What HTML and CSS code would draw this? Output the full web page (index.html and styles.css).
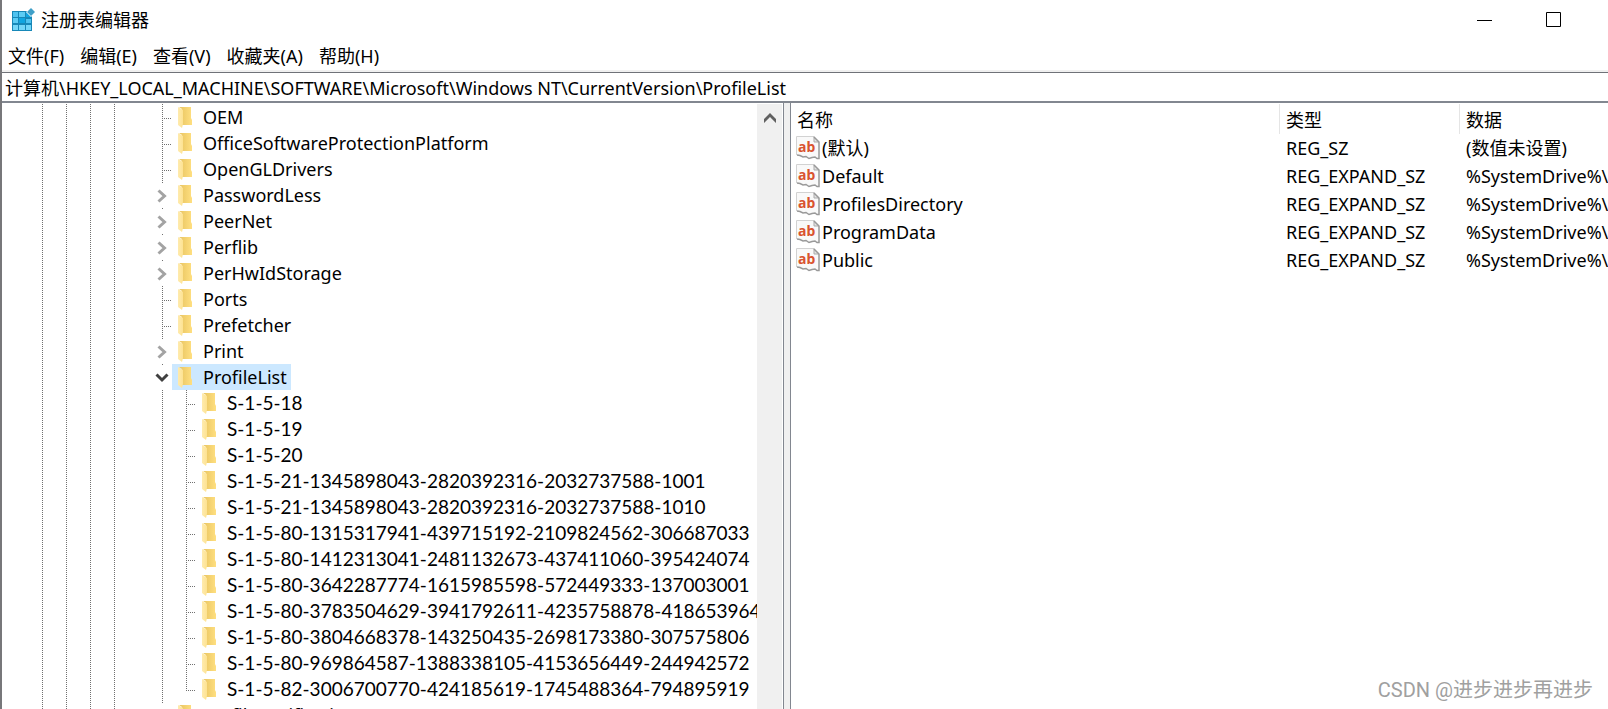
FILE: index.html
```
<!DOCTYPE html>
<html lang="zh-CN">
<head>
<meta charset="utf-8">
<title>注册表编辑器</title>
<link rel="stylesheet" href="styles.css">
</head>
<body>
<svg class="sprite" aria-hidden="true">
  <defs>
    <linearGradient id="flap" x1="0" x2="1"><stop offset="0" stop-color="#ffebae"/><stop offset="1" stop-color="#fde292"/></linearGradient>
    <linearGradient id="back" x1="0" x2="1"><stop offset="0" stop-color="#e8c460"/><stop offset="1" stop-color="#ffdf80"/></linearGradient>
  </defs>
  <symbol id="folder" viewBox="0 0 14 21">
    <path d="M1 0H13V11L14 13V18H4V2Z" fill="url(#back)"/>
    <path d="M0 0L5 3V17L4 21L0 18Z" fill="url(#flap)"/>
  </symbol>
  <symbol id="closed" viewBox="0 0 10 14"><path d="M1.500 1.500L7.500 7L1.500 12.500" fill="none" stroke="#a3a3a3" stroke-width="3"/></symbol>
  <symbol id="open" viewBox="0 0 14 10"><path d="M1.500 1.500L7 7L12.500 1.500" fill="none" stroke="#404040" stroke-width="3"/></symbol>
  <symbol id="string" viewBox="0 0 24 24">
    <path d="M1 1H18L23 6V23H21L19 21L16 22L12 23L9 20L6 21L1 19Z" fill="#f9f9f9"/>
    <path d="M.5 19V.5H18" fill="none" stroke="#d2d2d2"/>
    <path d="M18 .5V6H23" fill="#e4e4e4" stroke="#aaa"/>
    <path d="M18 1L23 6V22.500H21L19 21L16 21.500L13 22.500L10 20.500L7 21L4 19.500L1 19" fill="none" stroke="#999" stroke-width="1.500"/>
    <text x="2" y="16" class="ab">ab</text>
  </symbol>
</svg>

<header class="titlebar">
  <svg class="app-icon" width="24" height="24" viewBox="0 0 24 24" aria-hidden="true">
    <path d="M0 3H20V23H0Z" fill="#1788b8"/>
    <path d="M1 4H6V9H1ZM14 11H19V15H14Z" fill="#4fc3f0"/>
    <path d="M1 10H6V15H1ZM7 4H13V9H7Z" fill="#5cccf4"/>
    <path d="M7 10H13V15H7ZM14 4H19V9H14Z" fill="#10a5e0"/>
    <path d="M1 17H6V22H1ZM7 17H13V22H7ZM14 17H19V22H14Z" fill="#74d6f8"/>
    <path d="M19 0L24 4L19 9L14 4Z" fill="#fff"/>
    <path d="M19 0L23 4L19 8L15 4Z" fill="#3f9fc8"/>
  </svg>
  <h1>注册表编辑器</h1>
  <button class="caption" aria-label="最小化"><svg width="16" height="16"><path d="M0 8.500H15" stroke="#000"/></svg></button>
  <button class="caption" aria-label="最大化"><svg width="16" height="16"><path d="M.5 .5H14.500V14.500H.5Z" fill="none" stroke="#000"/></svg></button>
</header>
<nav class="menu">
  <button>文件(F)</button><button>编辑(E)</button><button>查看(V)</button><button>收藏夹(A)</button><button>帮助(H)</button>
</nav>
<input class="address" aria-label="地址" value="计算机\HKEY_LOCAL_MACHINE\SOFTWARE\Microsoft\Windows NT\CurrentVersion\ProfileList">
<main class="panes">
  <section class="tree-pane">
    <ul class="tree" id="tree">
      <li class="row"><span class="branch"></span><span class="key"><svg><use href="#folder"/></svg>OEM</span></li>
      <li class="row"><span class="branch"></span><span class="key"><svg><use href="#folder"/></svg>OfficeSoftwareProtectionPlatform</span></li>
      <li class="row"><span class="branch"></span><span class="key"><svg><use href="#folder"/></svg>OpenGLDrivers</span></li>
      <li class="row"><button class="toggle" aria-label="展开"><svg><use href="#closed"/></svg></button><span class="key"><svg><use href="#folder"/></svg>PasswordLess</span></li>
      <li class="row"><button class="toggle" aria-label="展开"><svg><use href="#closed"/></svg></button><span class="key"><svg><use href="#folder"/></svg>PeerNet</span></li>
      <li class="row"><button class="toggle" aria-label="展开"><svg><use href="#closed"/></svg></button><span class="key"><svg><use href="#folder"/></svg>Perflib</span></li>
      <li class="row"><button class="toggle" aria-label="展开"><svg><use href="#closed"/></svg></button><span class="key"><svg><use href="#folder"/></svg>PerHwIdStorage</span></li>
      <li class="row"><span class="branch"></span><span class="key"><svg><use href="#folder"/></svg>Ports</span></li>
      <li class="row"><span class="branch"></span><span class="key"><svg><use href="#folder"/></svg>Prefetcher</span></li>
      <li class="row"><button class="toggle" aria-label="展开"><svg><use href="#closed"/></svg></button><span class="key"><svg><use href="#folder"/></svg>Print</span></li>
      <li>
        <div class="row"><button class="toggle expanded" aria-label="折叠"><svg><use href="#open"/></svg></button><span class="key selected"><svg><use href="#folder"/></svg>ProfileList</span></div>
        <ul class="children">
          <li class="row"><span class="branch"></span><span class="key"><svg><use href="#folder"/></svg>S-1-5-18</span></li>
          <li class="row"><span class="branch"></span><span class="key"><svg><use href="#folder"/></svg>S-1-5-19</span></li>
          <li class="row"><span class="branch"></span><span class="key"><svg><use href="#folder"/></svg>S-1-5-20</span></li>
          <li class="row"><span class="branch"></span><span class="key"><svg><use href="#folder"/></svg>S-1-5-21-1345898043-2820392316-2032737588-1001</span></li>
          <li class="row"><span class="branch"></span><span class="key"><svg><use href="#folder"/></svg>S-1-5-21-1345898043-2820392316-2032737588-1010</span></li>
          <li class="row"><span class="branch"></span><span class="key"><svg><use href="#folder"/></svg>S-1-5-80-1315317941-439715192-2109824562-306687033</span></li>
          <li class="row"><span class="branch"></span><span class="key"><svg><use href="#folder"/></svg>S-1-5-80-1412313041-2481132673-437411060-395424074</span></li>
          <li class="row"><span class="branch"></span><span class="key"><svg><use href="#folder"/></svg>S-1-5-80-3642287774-1615985598-572449333-137003001</span></li>
          <li class="row"><span class="branch"></span><span class="key"><svg><use href="#folder"/></svg>S-1-5-80-3783504629-3941792611-4235758878-418653964</span></li>
          <li class="row"><span class="branch"></span><span class="key"><svg><use href="#folder"/></svg>S-1-5-80-3804668378-143250435-2698173380-307575806</span></li>
          <li class="row"><span class="branch"></span><span class="key"><svg><use href="#folder"/></svg>S-1-5-80-969864587-1388338105-4153656449-244942572</span></li>
          <li class="row"><span class="branch last"></span><span class="key"><svg><use href="#folder"/></svg>S-1-5-82-3006700770-424185619-1745488364-794895919</span></li>
        </ul>
      </li>
      <li class="row"><button class="toggle" aria-label="展开"><svg><use href="#closed"/></svg></button><span class="key"><svg><use href="#folder"/></svg>ProfileNotification</span></li>
    </ul>
    <div class="scrollbar"><button aria-label="向上滚动"><svg width="12" height="10"><path d="M0 10V6L6 0L12 6V10L6 4Z" fill="#606060"/></svg></button></div>
  </section>
  <section class="values-pane">
    <table class="values">
      <colgroup><col class="c-name"><col class="c-type"><col class="c-data"></colgroup>
      <thead><tr><th>名称</th><th>类型</th><th>数据</th></tr></thead>
      <tbody>
        <tr><td><span><svg><use href="#string"/></svg>(默认)</span></td><td>REG_SZ</td><td>(数值未设置)</td></tr>
        <tr><td><span><svg><use href="#string"/></svg>Default</span></td><td>REG_EXPAND_SZ</td><td>%SystemDrive%\Users\Default</td></tr>
        <tr><td><span><svg><use href="#string"/></svg>ProfilesDirectory</span></td><td>REG_EXPAND_SZ</td><td>%SystemDrive%\Users</td></tr>
        <tr><td><span><svg><use href="#string"/></svg>ProgramData</span></td><td>REG_EXPAND_SZ</td><td>%SystemDrive%\ProgramData</td></tr>
        <tr><td><span><svg><use href="#string"/></svg>Public</span></td><td>REG_EXPAND_SZ</td><td>%SystemDrive%\Users\Public</td></tr>
      </tbody>
    </table>
  </section>
</main>
<div class="watermark">CSDN @进步进步再进步</div>
</body>
</html>
```

FILE: styles.css
```
:root {
  --dot: #707070;
  --edge: #828790;
  --dots-v: repeating-linear-gradient(to bottom, var(--dot) 0 1px, transparent 1px 2px);
  --dots-h: repeating-linear-gradient(to right, var(--dot) 0 1px, transparent 1px 2px);
}

* { box-sizing: border-box; }

body {
  margin: 0;
  height: 100vh;
  display: flex;
  flex-direction: column;
  overflow: hidden;
  border-left: 2px solid #77777a;
  background: #fff;
  color: #000;
  font: 18px/26px "Noto Sans", "Noto Sans CJK SC", sans-serif;
}

button, input {
  margin: 0;
  padding: 0;
  border: 0;
  background: none;
  color: inherit;
  font: inherit;
}

ul { margin: 0; padding: 0; list-style: none; }

.sprite { position: absolute; width: 0; height: 0; }

.ab { font: bold 14px "Noto Sans", sans-serif; fill: #d9532f; }

.titlebar { flex: none; display: flex; align-items: center; height: 40px; padding-left: 10px; }
.titlebar h1 { flex: 1; margin: 0 0 0 5px; font-size: 18px; font-weight: 400; line-height: 26px; }
.caption { display: flex; justify-content: center; width: 69px; }
.caption:last-child { margin-right: 20px; }

.menu { flex: none; display: flex; gap: 16px; height: 32px; padding: 3px 6px; border-bottom: 2px solid #f0f0f0; }

.address {
  flex: none;
  height: 31px;
  padding: 0 3px;
  border-top: 1px solid #6f7278;
  border-bottom: 2px solid var(--edge);
}

.panes { flex: 1; display: flex; min-height: 0; }

.tree-pane {
  flex: none;
  display: flex;
  width: 782px;
  padding-top: 1px;
  border-right: 1px solid var(--edge);
}

.tree {
  flex: 1;
  min-width: 0;
  overflow: hidden;
  padding-left: 148px;
  background:
    var(--dots-v) 40px 0 / 1px 100% no-repeat,
    var(--dots-v) 64px 0 / 1px 100% no-repeat,
    var(--dots-v) 88px 0 / 1px 100% no-repeat,
    var(--dots-v) 112px 0 / 1px 100% no-repeat;
}

.row { display: flex; height: 26px; }

.children {
  padding-left: 24px;
  background: var(--dots-v) 12px 0 / 1px 100% no-repeat;
  font: 19px/26px Lato, sans-serif;
}

.branch {
  flex: none;
  width: 22px;
  background:
    var(--dots-v) 12px 0 / 1px 100% no-repeat,
    var(--dots-h) 12px 14px / 11px 1px no-repeat;
}
.branch.last {
  background:
    var(--dots-v) 12px 0 / 1px 14px no-repeat,
    var(--dots-h) 12px 14px / 11px 1px no-repeat;
}

.toggle {
  flex: none;
  display: flex;
  align-items: center;
  width: 22px;
  padding: 2px 0 0 7px;
  background: linear-gradient(var(--dot), var(--dot)) 12px 0 / 1px 1px no-repeat;
}
.toggle svg { width: 10px; height: 14px; }
.toggle.expanded { padding-left: 5px; }
.toggle.expanded svg { width: 14px; height: 10px; }

.key { display: flex; align-items: center; gap: 11px; padding: 0 4px 0 6px; white-space: nowrap; }
.key svg { flex: none; width: 14px; height: 21px; }
.selected { background: #cce8ff; }

.scrollbar { flex: none; width: 26px; border-right: 1px solid #fff; background: #f0f0f0; }
.scrollbar button { display: flex; align-items: center; justify-content: center; width: 100%; height: 28px; }

.values-pane {
  flex: 1;
  min-width: 0;
  overflow: hidden;
  border-left: 6px solid #f0f0f0;
  box-shadow: inset 1px 0 var(--edge);
  padding: 1px 0 0 1px;
}

.values { width: 960px; table-layout: fixed; border-collapse: separate; border-spacing: 0; white-space: nowrap; }
.c-name { width: 489px; }
.c-type { width: 180px; }
.values th, .values td { height: 28px; padding: 0 6px; font-weight: 400; text-align: left; line-height: 28px; }
.values th { height: 30px; padding: 2px 6px 0; border-right: 1px solid #e5e5e5; }
.values td:first-child { padding-left: 5px; }
.values td span { display: flex; align-items: center; gap: 2px; }
.values td svg { width: 24px; height: 24px; }

.watermark {
  position: absolute;
  right: 15px;
  bottom: 6px;
  color: #a0a0a0;
  font: 20px/26px Roboto, "Noto Sans CJK SC", sans-serif;
}
```
